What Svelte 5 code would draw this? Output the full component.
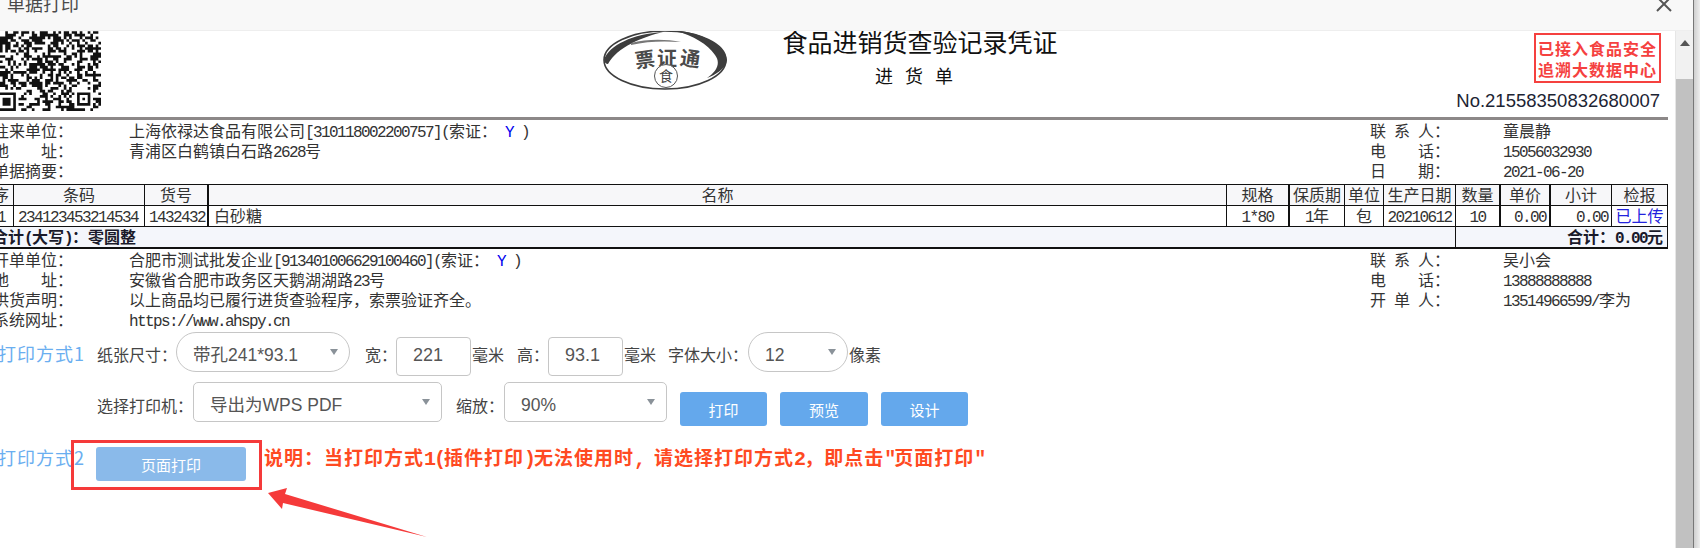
<script>
  const runs = (s) => (s.match(/[\x00-\x7f]+|[^\x00-\x7f]+/g) || []).map((t) => ({ t, latin: /^[\x00-\x7f]/.test(t) }));

  // QR pattern: seeded noise with one finder and one alignment mark
  const P = 2.66, COLS = 39, ROWS = 30;
  function buildQr() {
    let seed = 20210620;
    const rnd = () => ((seed = (seed * 1664525 + 1013904223) >>> 0) / 4294967296);
    const g = [];
    for (let r = 0; r < ROWS; r++) {
      g.push([]);
      for (let c = 0; c < COLS; c++) g[r].push(rnd() < 0.52);
    }
    const stamp = (r0, c0, n) => {
      for (let r = -1; r <= n; r++)
        for (let c = -1; c <= n; c++) {
          if (!g[r0 + r] || c0 + c < 0 || c0 + c >= COLS) continue;
          const ring = Math.min(r, c, n - 1 - r, n - 1 - c);
          g[r0 + r][c0 + c] = ring === 0 || ring >= 2;
        }
    };
    stamp(23, 0, 7);
    stamp(23, 30, 5);
    let d = '';
    for (let r = 0; r < ROWS; r++)
      for (let c = 0; c < COLS; c++)
        if (g[r][c]) d += `M${(c * P).toFixed(2)} ${(r * P + 0.2).toFixed(2)}h${P}v${P}h-${P}z`;
    return d;
  }
  const qr = buildQr();

  const head = ['序','条码','货号','名称','规格','保质期','单位','生产日期','数量','单价','小计','检报'];
  const widths = [25,131,64,1018,63,55,39,72,45,50,61,56];
  const thick = [2,4,8,9];
  const row = [
    ['1','ct'],['234123453214534','lt'],['1432432','lt'],['白砂糖','lt2'],['1*80','ct'],['1年','ct'],['包','ct'],['20210612','ct'],['10','ct'],['0.00','rt'],['0.00','rt'],['已上传','ct link']
  ];
</script>

{#snippet txt(s)}{#each runs(s) as r}{#if r.latin}<span class="m">{r.t}</span>{:else}{r.t}{/if}{/each}{/snippet}

{#snippet arrow()}<i class="caret"></i>{/snippet}

{#snippet info(a, b, c, d)}
  <div class="irow">
    <div>{@render txt(a)}</div>
    <div>{@render b()}</div>
    <div>{@render txt(c)}</div>
    <div>{@render txt(d)}</div>
  </div>
{/snippet}

{#snippet s1()}{@render txt('上海依禄达食品有限公司[310118002200757](索证： ')}<span class="m blue">Y</span>{@render txt(' )')}{/snippet}
{#snippet s2()}{@render txt('青浦区白鹤镇白石路2628号')}{/snippet}
{#snippet s3()}{/snippet}
{#snippet s4()}{@render txt('合肥市测试批发企业[913401006629100460](索证： ')}<span class="m blue">Y</span>{@render txt(' )')}{/snippet}
{#snippet s5()}{@render txt('安徽省合肥市政务区天鹅湖湖路23号')}{/snippet}
{#snippet s6()}{@render txt('以上商品均已履行进货查验程序，索票验证齐全。')}{/snippet}
{#snippet s7()}{@render txt('https://www.ahspy.cn')}{/snippet}

<div class="stage">
  <div class="dialog">
    <header class="bar">
      <span class="bar-title">单据打印</span>
      <svg class="close" width="16" height="16" viewBox="0 0 16 16"><path d="M1 1L15 15M15 1L1 15" stroke="#555" stroke-width="2" fill="none"/></svg>
    </header>
    <div class="body">
      <div class="content">
        <div class="sheet">
          <div class="head">
            <svg class="qr" width="112" height="80" viewBox="-11 0 112 80"><path d={qr} transform="translate(-2.74 0)" fill="#111"/></svg>
            <svg class="logo" width="124" height="60" viewBox="0 0 124 60">
              <ellipse cx="62" cy="29" rx="61" ry="29" fill="none" stroke="#3d3d3d" stroke-width="1.6"/>
              <path d="M1 29C6 14 30 3 60 1C40 6 14 16 5 33C3 33 1 31 1 29Z" fill="#3d3d3d"/>
              <path d="M28 12C44 8 62 8 78 11C62 10 44 10 28 14Z" fill="#777"/>
              <path d="M70 -1C100 2 122 14 124 29C123 38 112 44 104 47C114 40 118 32 112 24C104 12 88 4 70 -1Z" fill="#3d3d3d"/>
              <text x="42" y="36" class="lg" transform="rotate(-8 42 30)">票</text>
              <text x="64" y="35" class="lg">证</text>
              <text x="87" y="35" class="lg" transform="rotate(8 87 29)">通</text>
              <circle cx="63" cy="45" r="11.5" fill="#fff" stroke="#555" stroke-width="1"/>
              <text x="63" y="50" class="lg2">食</text>
            </svg>
            <div class="titles">
              <div class="t1">食品进销货查验记录凭证</div>
              <div class="t2">进货单</div>
            </div>
            <div class="right">
              <div class="stamp"><div>已接入食品安全</div><div>追溯大数据中心</div></div>
              <div class="no">No.21558350832680007</div>
            </div>
          </div>

          <div class="block top">
            {@render info('往来单位：', s1, '联 系 人：', '童晨静')}
            {@render info('地    址：', s2, '电    话：', '15056032930')}
            {@render info('单据摘要：', s3, '日    期：', '2021-06-20')}
          </div>

          <table>
            <colgroup>{#each widths as w}<col style="width:{w}px" />{/each}</colgroup>
            <thead>
              <tr>{#each head as h, i}<th class:thick={thick.includes(i)}><div class="cell">{h}</div></th>{/each}</tr>
            </thead>
            <tbody>
              <tr>{#each row as c, i}<td class="{c[1]}" class:thick={thick.includes(i)}><div class="cell">{@render txt(c[0])}</div></td>{/each}</tr>
              <tr class="total">
                <td colspan="8" class="sum-l"><div class="cell">{@render txt('合计(大写)：零圆整')}</div></td>
                <td colspan="4" class="sum-r"><div class="cell">{@render txt('合计：0.00元')}</div></td>
              </tr>
            </tbody>
          </table>

          <div class="block bottom">
            {@render info('开单单位：', s4, '联 系 人：', '吴小会')}
            {@render info('地    址：', s5, '电    话：', '13888888888')}
            {@render info('供货声明：', s6, '开 单 人：', '13514966599/李为')}
            {@render info('系统网址：', s7, '', '')}
          </div>
        </div>

        <div class="ctl r1">
          <span class="way">打印方式1</span>
          <span class="lb l-paper">纸张尺寸：</span>
          <div class="sel round w174">带孔241*93.1{@render arrow()}</div>
          <span class="lb l-w">宽：</span>
          <div class="inp">221</div>
          <span class="lb l-mm1">毫米</span>
          <span class="lb l-h">高：</span>
          <div class="inp">93.1</div>
          <span class="lb l-mm2">毫米</span>
          <span class="lb l-font">字体大小：</span>
          <div class="sel round w100">12{@render arrow()}</div>
          <span class="lb l-px">像素</span>
        </div>

        <div class="ctl r2">
          <span class="lb l-printer">选择打印机：</span>
          <div class="sel w249">导出为WPS PDF{@render arrow()}</div>
          <span class="lb l-zoom">缩放：</span>
          <div class="sel w163">90%{@render arrow()}</div>
          <button class="btn b87">打印</button>
          <button class="btn b88">预览</button>
          <button class="btn b87">设计</button>
        </div>

        <div class="ctl r3">
          <span class="way">打印方式2</span>
          <button class="btn page">页面打印</button>
          <span class="note">{@render txt('说明：当打印方式1(插件打印)无法使用时, 请选择打印方式2，即点击"页面打印"')}</span>
        </div>
      </div>
      <div class="scroll">
        <div class="track"><svg width="10" height="6" viewBox="0 0 10 6"><path d="M5 0L10 6H0Z" fill="#555"/></svg></div>
        <div class="thumb"></div>
      </div>
    </div>
    <div class="redbox"></div>
    <svg class="redarrow" width="170" height="60" viewBox="0 0 170 60">
      <path d="M0 5L19 0L17 6L159 49L15 15L14 21Z" fill="#f53a3a"/>
    </svg>
  </div>
  <div class="shade"></div>
</div>

<style>
  :global(body) { margin: 0; background: #fff; overflow: hidden; }
  .stage { display: flex; width: 1700px; height: 548px; overflow: hidden; font-family: "Noto Sans CJK SC", "Liberation Sans", sans-serif; color: #2a2a2a; }
  .dialog { position: relative; width: 1693px; flex: none; display: flex; flex-direction: column; }
  .shade { flex: 1; border-left: 1px solid #777; background: linear-gradient(90deg, #cfcfcf, #eee); }

  .bar { height: 30px; flex: none; background: #f8f8f8; border-bottom: 1px solid #eee; display: flex; justify-content: space-between; padding: 0 21px 0 7px; }
  .bar-title { font-size: 18px; line-height: 20px; margin-top: -7px; color: #4a4a4a; }
  .close { margin-top: -4px; }

  .body { flex: 1; display: flex; min-height: 0; }
  .content { flex: 1; min-width: 0; overflow: hidden; }
  .sheet { width: 1679px; margin-left: -11px; font-size: 16px; line-height: 20px; }
  .m { font-family: "Liberation Mono", monospace; font-size: 16px; letter-spacing: -1.6px; line-height: 1; }
  .blue { color: #0000ee; }

  .head { display: grid; grid-template-columns: 112px 502px 124px 386px 1fr; height: 86px; border-bottom: 3px solid #8c8888; box-sizing: content-box; }
  .qr { grid-column: 1; display: block; }
  .logo { grid-column: 3; display: block; }
  .lg { font-size: 20px; font-weight: 700; fill: #4a4a4a; text-anchor: middle; }
  .lg2 { font-size: 14px; fill: #444; text-anchor: middle; }
  .titles { grid-column: 4; text-align: center; margin-top: -5px; }
  .t1 { font-size: 25px; line-height: 30px; color: #111; }
  .t2 { font-size: 18px; line-height: 24px; letter-spacing: 12px; margin-top: 7px; color: #111; }
  .right { grid-column: 5; display: flex; flex-direction: column; align-items: flex-end; padding: 2px 7px 0 0; }
  .stamp { width: 127px; height: 50px; box-sizing: border-box; border: 2px solid #f5413f; color: #f5413f; font-size: 16px; font-weight: 700; line-height: 21px; letter-spacing: 1px; text-align: center; padding-top: 3px; }
  .no { font-family: "Liberation Sans", sans-serif; font-size: 18.5px; line-height: 22px; margin-top: 7px; margin-right: 1px; color: #1c2433; }

  .block { padding-left: 4px; }
  .top { padding-top: 2px; margin-bottom: 2px; }
  .bottom { padding-top: 2px; }
  .irow { display: grid; grid-template-columns: 136px 1241px 133px 1fr; height: 20px; color: #333; line-height: 16px; }
  .irow > div { white-space: pre; height: 20px; }

  table { table-layout: fixed; border-collapse: separate; border-spacing: 0; width: 1679px; }
  th, td { padding: 0; border-right: 1px solid #111; border-bottom: 1px solid #111; font-weight: 400; box-sizing: border-box; color: #333; overflow: hidden; white-space: pre; vertical-align: top; }
  .cell { height: 20px; line-height: 18px; }
  th { background: #f7f7f9; border-top: 1px solid #111; text-align: center; }
  th.thick, td.thick { border-right-width: 2px; }
  .ct { text-align: center; }
  .lt { padding-left: 4px; }
  .lt2 { padding-left: 5px; }
  .rt { text-align: right; padding-right: 3px; }
  .link { color: #2222dd; }
  .total td { background: #f4f6fb; font-weight: 700; color: #1a1a2a; border-bottom-width: 2px; }
  .total .m { font-weight: 700; }
  .sum-l { padding-left: 3px; }
  .sum-r { text-align: right; padding-right: 4px; }

  .ctl { display: flex; align-items: flex-start; font-size: 16px; line-height: 20px; color: #444; white-space: nowrap; }
  .r1 { height: 50px; margin-top: 1px; }
  .r2 { height: 65px; }
  .r3 { height: 40px; }
  .way { flex: none; width: 98px; margin-left: -2px; margin-right: 1px; font-size: 18px; letter-spacing: 1px; color: #6aaef0; margin-top: 11px; }
  .r3 .way { width: 97px; margin-right: 1px; margin-top: 0; }
  .lb { flex: none; margin-top: 12px; }
  .l-paper { width: 79px; }
  .l-w { margin-left: 15px; width: 31px; }
  .l-mm1 { margin-left: 1px; width: 45px; }
  .l-h { width: 31px; }
  .l-mm2 { margin-left: 1px; width: 44px; }
  .l-font { width: 80px; }
  .l-px { margin-left: 1px; }
  .l-printer { margin-left: 97px; width: 96px; margin-top: 13px; }
  .l-zoom { margin-left: 14px; width: 48px; margin-top: 13px; }

  .sel { position: relative; flex: none; height: 40px; box-sizing: border-box; border: 1px solid #c6c6c6; border-radius: 5px; padding: 6px 0 0 16px; display: flex; align-items: center; font-family: "Liberation Sans", "Noto Sans CJK SC", sans-serif; font-size: 17.5px; color: #555; background: #fff; }
  .round { border-radius: 20px; }
  .w174 { width: 174px; }
  .w100 { width: 100px; }
  .w249 { width: 249px; }
  .w163 { width: 163px; }
  .caret { position: absolute; top: 16px; right: 11px; width: 0; height: 0; border-left: 4.5px solid transparent; border-right: 4.5px solid transparent; border-top: 6px solid #8a9299; }
  .inp { flex: none; width: 75px; height: 39px; margin-top: 5px; box-sizing: border-box; border: 1px solid #c6c6c6; border-radius: 4px; padding: 0 0 3px 16px; display: flex; align-items: center; font-family: "Liberation Sans", sans-serif; font-size: 18px; color: #555; }

  .btn { flex: none; height: 34px; border: 0; border-radius: 3px; background: #64a8ec; color: #fff; font-family: "Noto Sans CJK SC", sans-serif; font-size: 15px; padding: 0; margin-top: 10px; margin-left: 13px; }
  .b87 { width: 87px; }
  .b88 { width: 88px; }
  .page { width: 150px; margin: 0; background: #8abaea; }
  .note { margin-left: 18px; margin-top: 0; font-size: 19px; letter-spacing: 1px; font-weight: 700; color: #ff4a22; }
  .note .m { font-size: 20px; letter-spacing: -2px; font-weight: 700; }

  .scroll { flex: none; width: 18px; box-sizing: border-box; border-left: 1px solid #e6e6e6; display: flex; flex-direction: column; }
  .track { height: 48px; background: #f1f1f1; display: flex; justify-content: center; padding-top: 9px; box-sizing: border-box; }
  .track svg { display: block; }
  .thumb { flex: 1; background: #c1c1c1; }

  .redbox { position: absolute; left: 71px; top: 440px; width: 191px; height: 50px; box-sizing: border-box; border: 3px solid #f53a3a; }
  .redarrow { position: absolute; left: 268px; top: 488px; }
</style>
